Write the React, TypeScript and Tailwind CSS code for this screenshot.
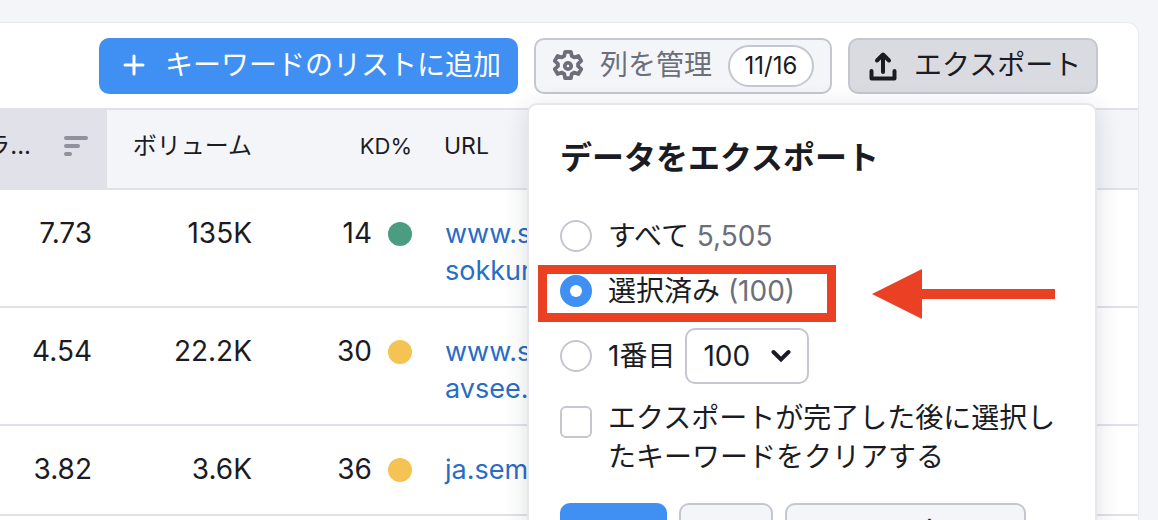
const rows = [
  { cpc: '7.73', volume: '135K', kd: '14', dot: 'bg-[#4a9d80]', url: ['www.semrush.com/', 'sokkuri/'], h: 'h-[118px]' },
  { cpc: '4.54', volume: '22.2K', kd: '30', dot: 'bg-[#f4c354]', url: ['www.semrush.com/', 'avsee.in/'], h: 'h-[118px]' },
  { cpc: '3.82', volume: '3.6K', kd: '36', dot: 'bg-[#f4c354]', url: ['ja.semrush.com/'], h: 'h-[90px]' },
];

function Gear() {
  return (
    <svg className="shrink-0" width="32" height="32" viewBox="1 1 22 22" fill="none" stroke="#6c6e79" strokeWidth="2.6" strokeLinejoin="round">
      <path d="M10 2.3h4l.6 2.9 1.7.9 2.8-1 2 3.4-2.2 2a6 6 0 0 1 0 1.6l2.2 2-2 3.4-2.8-1-1.7.9-.6 2.9h-4l-.6-2.9-1.7-.9-2.8 1-2-3.4 2.2-2a6 6 0 0 1 0-1.6l-2.2-2 2-3.4 2.8 1 1.7-.9z" />
      <circle cx="12" cy="12" r="2.2" />
    </svg>
  );
}

export default function App() {
  return (
    <div className="relative h-[520px] w-[1158px] overflow-hidden bg-[#f4f5f9] pt-[22px] pr-[19px] font-['Inter','Noto_Sans_CJK_JP',sans-serif] text-[#1b1c23]">
      <div className="h-[498px] overflow-hidden rounded-tr-xl border-t border-r border-[#e9eaef] bg-white">
        <div className="flex h-[85px] items-start justify-end gap-4 pt-[15px] pr-[40px]">
          <button className="flex h-[56px] w-[419px] shrink-0 items-center gap-[20px] rounded-[10px] bg-[#408ff3] pb-[2px] pl-[24px] text-[28px] whitespace-nowrap text-white">
            <svg className="shrink-0" width="22" height="22" viewBox="0 0 22 22" stroke="white" strokeWidth="3" strokeLinecap="round">
              <path d="M11 2v18M2 11h18" />
            </svg>
            キーワードのリストに追加
          </button>
          <button className="flex h-[56px] w-[298px] shrink-0 items-center gap-[16px] rounded-[10px] border-2 border-[#c4c7d0] bg-[#f4f5f9] pl-[16px] text-[28px] whitespace-nowrap text-[#6c6e79]">
            <Gear />
            <span className="pb-[2px]">列を管理</span>
            <span className="flex h-[42px] w-[86px] shrink-0 items-center justify-center rounded-full border-2 border-[#c4c7d0] bg-white text-[24px] text-[#1b1c23]">11/16</span>
          </button>
          <button className="flex h-[56px] w-[250px] shrink-0 items-center gap-[17px] rounded-[10px] border-2 border-[#c4c7d0] bg-[#dadbe1] pl-[19px] text-[28px] whitespace-nowrap">
            <svg className="shrink-0" width="28" height="30" viewBox="0 0 28 30" fill="none" stroke="#1b1c23" strokeWidth="4" strokeLinecap="round" strokeLinejoin="round">
              <path d="M14 21V4M8 9.5 14 3.5l6 6" />
              <path d="M2.5 20v7.5h23V20" />
            </svg>
            <span className="pb-[2px]">エクスポート</span>
          </button>
        </div>

        <div className="flex h-[82px] items-center border-y-2 border-[#e0e1e9] bg-[#f4f5f9] text-[23px]">
          <div className="flex h-full w-[107px] shrink-0 items-center justify-end gap-[33px] bg-[#e0e1e9] pr-[19px] pb-[6px]">
            <span className="text-[24px] whitespace-nowrap">ラ...</span>
            <svg className="shrink-0" width="24" height="20" viewBox="0 0 24 20" fill="#8f919d">
              <rect y="0" width="24" height="4" rx="2" />
              <rect y="8" width="16" height="4" rx="2" />
              <rect y="16" width="8" height="4" rx="2" />
            </svg>
          </div>
          <div className="mb-[6px] w-[145px] text-right text-[24px]">ボリューム</div>
          <div className="mb-[6px] w-[160px] text-right text-[22px]">KD%</div>
          <div className="mb-[6px] ml-[32px]">URL</div>
        </div>

        {rows.map((row) => (
          <div key={row.kd} className={`flex items-start border-b-2 border-[#e0e1e9] pt-[25px] text-[28px] leading-[37px] ${row.h}`}>
            <div className="w-[92px] text-right">{row.cpc}</div>
            <div className="w-[160px] text-right">{row.volume}</div>
            <div className="w-[120px] text-right">{row.kd}</div>
            <div className={`mt-[7px] ml-[16px] h-6 w-6 shrink-0 rounded-full ${row.dot}`} />
            <div className="ml-[33px] text-[27px] whitespace-nowrap text-[#2a6cc4]">
              {row.url.map((line) => (
                <div key={line}>{line}</div>
              ))}
            </div>
          </div>
        ))}
      </div>

      <div className="absolute top-[103px] left-[527px] h-[480px] w-[570px] rounded-[10px] border-2 border-[#e6e7ed] bg-white pt-[31px] pl-[31px] shadow-[0_4px_24px_rgba(30,32,60,0.14)]">
        <h2 className="text-[32px] leading-[44px] font-bold">データをエクスポート</h2>

        <div className="mt-[36px] flex h-[40px] items-center gap-[16px] text-[28px]">
          <span className="h-8 w-8 shrink-0 rounded-full border-2 border-[#c4c7d0]" />
          <span>すべて <span className="text-[#6c6e79]">5,505</span></span>
        </div>
        <div className="mt-[15px] flex h-[40px] items-center gap-[16px] text-[28px]">
          <span className="flex h-8 w-8 shrink-0 items-center justify-center rounded-full bg-[#408ff3]">
            <span className="h-[12px] w-[12px] rounded-full bg-white" />
          </span>
          <span>選択済み <span className="text-[#6c6e79]">(100)</span></span>
        </div>
        <div className="mt-[17px] flex items-center gap-[16px] text-[28px]">
          <span className="h-8 w-8 shrink-0 rounded-full border-2 border-[#c4c7d0]" />
          <span>1番目</span>
          <span className="-ml-[6px] flex h-[56px] w-[124px] items-center justify-between rounded-[10px] border-2 border-[#c4c7d0] pr-[16px] pl-[16px]">
            100
            <svg width="20" height="14" viewBox="0 0 20 14" fill="none" stroke="#1b1c23" strokeWidth="4" strokeLinecap="round">
              <path d="M2.5 3 10 10.5 17.5 3" />
            </svg>
          </span>
        </div>
        <div className="mt-[15px] flex items-start gap-[16px] text-[28px] leading-[39px]">
          <span className="mt-[7px] h-8 w-8 shrink-0 rounded-[6px] border-2 border-[#c4c7d0]" />
          <span className="w-[450px]">エクスポートが完了した後に選択したキーワードをクリアする</span>
        </div>
        <div className="mt-[26px] flex gap-3 text-[26px]">
          <button className="h-[50px] w-[107px] rounded-[10px] bg-[#408ff3] pt-[3px] text-white">Excel</button>
          <button className="h-[50px] w-[94px] rounded-[10px] border-2 border-[#c4c7d0] bg-[#f4f5f9] pt-[3px]">CSV</button>
          <button className="h-[50px] w-[241px] rounded-[10px] border-2 border-[#c4c7d0] bg-[#f4f5f9] pt-[3px]">CSV Semicolon</button>
        </div>
      </div>

      {/* red callout drawn over the screenshot */}
      <div className="absolute top-[265px] left-[538px] h-[57px] w-[298px] border-[9px] border-[#ea4024]" />
      <svg className="absolute top-[269px] left-[872px]" width="184" height="50" viewBox="0 0 184 50" fill="#ea4024">
        <path d="M0 25 50 0v20h133v10H50v20z" />
      </svg>
    </div>
  );
}
